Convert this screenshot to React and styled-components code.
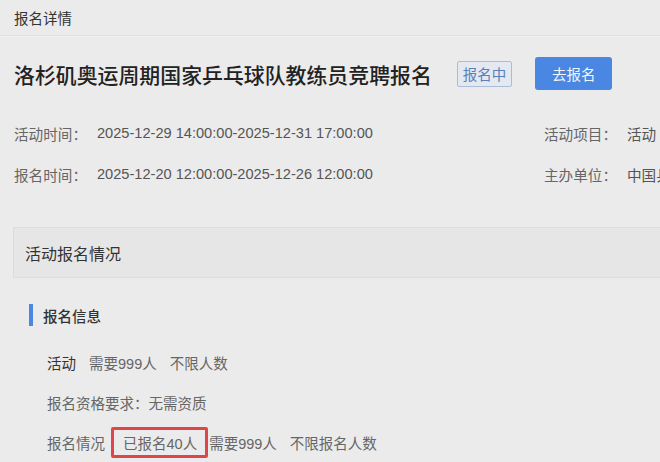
import styled, { createGlobalStyle } from 'styled-components'

const Global = createGlobalStyle`
  html, body {
    margin: 0;
    padding: 0;
    background: #ebebeb;
  }
  body {
    width: 660px;
    height: 462px;
    overflow: hidden;
    font-family: "Liberation Sans", "Noto Sans CJK SC", sans-serif;
  }
`

const Page = styled.div`
  width: 800px;
  background: #ebebeb;
  color: #555;
`

const TopBar = styled.div`
  height: 36px;
  box-sizing: border-box;
  padding-left: 14px;
  display: flex;
  align-items: center;
  font-size: 14.5px;
  color: #333;
  border-bottom: 1px solid #e0e0e0;
  box-shadow: 0 1px 0 #f1f1f1;
`

const TitleRow = styled.div`
  display: flex;
  align-items: center;
  padding: 21px 0 0 14px;
  height: 33px;
`

const Title = styled.h1`
  margin: 0;
  font-size: 20.9px;
  font-weight: 500;
  color: #222;
  letter-spacing: 0;
  font-family: "Noto Sans CJK SC", sans-serif;
`

const Tag = styled.span`
  margin-left: 25px;
  height: 26px;
  box-sizing: border-box;
  padding: 0 5px;
  display: flex;
  align-items: center;
  border: 1px solid #a9bcd8;
  border-radius: 2px;
  background: #e3e8f1;
  color: #5b7fb8;
  font-size: 14.5px;
`

const Button = styled.button`
  margin-left: 23px;
  width: 77px;
  height: 33px;
  border: none;
  border-radius: 3px;
  background: #4a87e2;
  color: #f2f6fd;
  font-size: 14.5px;
  font-family: "Noto Sans CJK SC", sans-serif;
  padding: 0;
`

const InfoGrid = styled.div`
  display: grid;
  grid-template-columns: 530px 1fr;
  row-gap: 21px;
  padding: 33px 0 0 14px;
`

const InfoItem = styled.div`
  display: flex;
  align-items: center;
  height: 20px;
  font-size: 14.6px;
  white-space: nowrap;
  color: #555;
`

const Label = styled.span`
  width: ${p => p.w || 83}px;
  color: #666;
`

const Panel = styled.div`
  margin: 43px 0 0 13px;
  height: 51px;
  box-sizing: border-box;
  border: 1px solid #dcdcdc;
  background: #e6e6e6;
  display: flex;
  align-items: center;
  padding-left: 11px;
  font-size: 16px;
  color: #333;
`

const Section = styled.div`
  padding: 26px 0 0 29px;
`

const SubHead = styled.div`
  display: flex;
  align-items: center;
  height: 22px;
  border-left: 4px solid #4a87e2;
  padding-left: 10px;
  font-size: 14.5px;
  font-weight: 500;
  color: #333;
`

const Rows = styled.div`
  padding: 26px 0 0 18px;
  display: flex;
  flex-direction: column;
  gap: 20px;
`

const Row = styled.div`
  display: flex;
  align-items: center;
  height: 20px;
  font-size: 14.5px;
  color: #666;
  white-space: nowrap;
  gap: 13px;
`

const Strong = styled.span`
  color: #333;
`

const Highlight = styled.span`
  display: flex;
  align-items: center;
  height: 31px;
  box-sizing: border-box;
  padding: 0 8px 0 9px;
  border: 3px solid #df4649;
  border-radius: 2px;
  margin: 0 -12px 0 -7px;
`

const App = () => {
  return (
    <>
      <Global />
      <Page>
        <TopBar>报名详情</TopBar>
        <TitleRow>
          <Title>洛杉矶奥运周期国家乒乓球队教练员竞聘报名</Title>
          <Tag>报名中</Tag>
          <Button>去报名</Button>
        </TitleRow>
        <InfoGrid>
          <InfoItem><Label>活动时间：</Label>2025-12-29 14:00:00-2025-12-31 17:00:00</InfoItem>
          <InfoItem><Label>活动项目：</Label>活动</InfoItem>
          <InfoItem><Label>报名时间：</Label>2025-12-20 12:00:00-2025-12-26 12:00:00</InfoItem>
          <InfoItem><Label>主办单位：</Label>中国乒乓球协会</InfoItem>
        </InfoGrid>
        <Panel>活动报名情况</Panel>
        <Section>
          <SubHead>报名信息</SubHead>
          <Rows>
            <Row><Strong>活动</Strong><span>需要999人</span><span>不限人数</span></Row>
            <Row><span>报名资格要求：无需资质</span></Row>
            <Row>
              <span>报名情况</span>
              <Highlight>已报名40人</Highlight>
              <span>需要999人</span>
              <span>不限报名人数</span>
            </Row>
          </Rows>
        </Section>
      </Page>
    </>
  )
}

export default App
